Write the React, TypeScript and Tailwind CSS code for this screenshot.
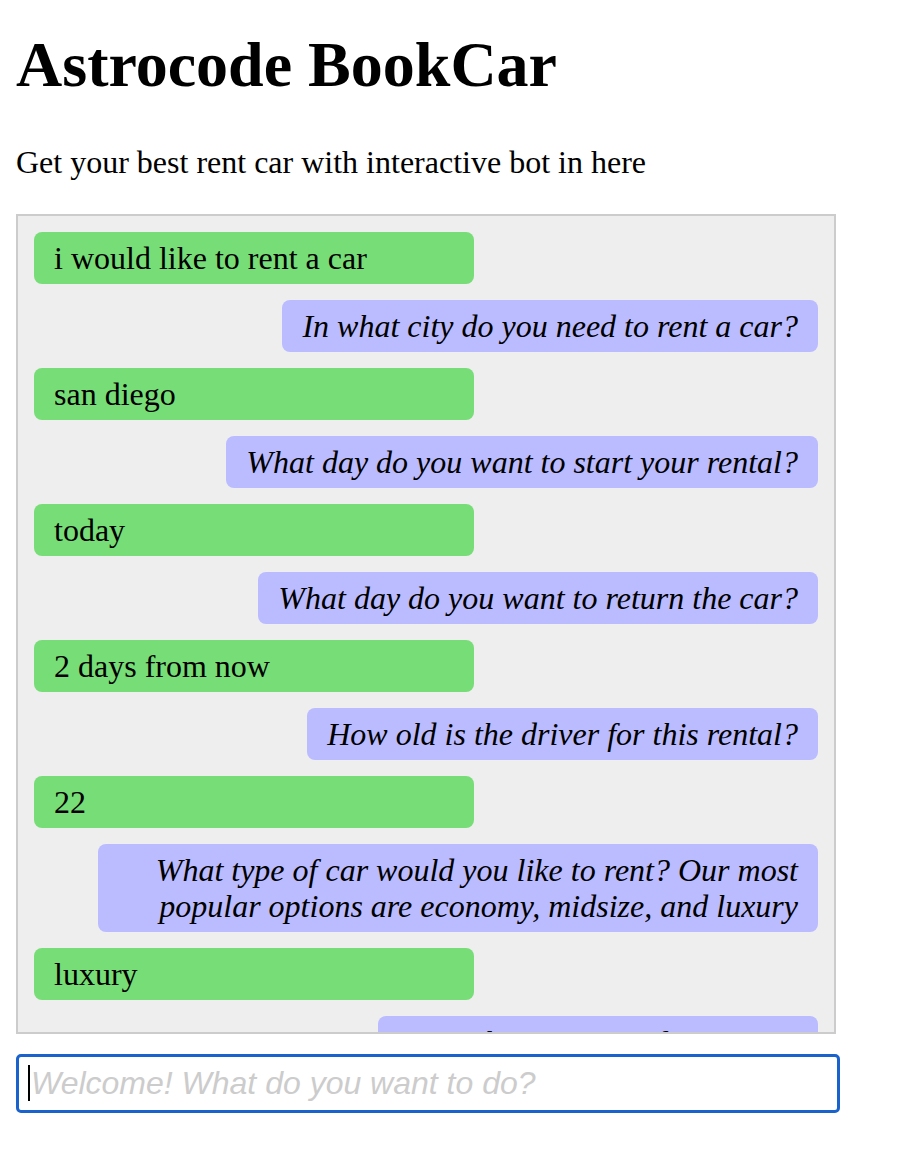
import React from 'react';

type Message = { from: 'user' | 'lex'; text: string };

const messages: Message[] = [
  { from: 'user', text: 'i would like to rent a car' },
  { from: 'lex', text: 'In what city do you need to rent a car?' },
  { from: 'user', text: 'san diego' },
  { from: 'lex', text: 'What day do you want to start your rental?' },
  { from: 'user', text: 'today' },
  { from: 'lex', text: 'What day do you want to return the car?' },
  { from: 'user', text: '2 days from now' },
  { from: 'lex', text: 'How old is the driver for this rental?' },
  { from: 'user', text: '22' },
  {
    from: 'lex',
    text: 'What type of car would you like to rent? Our most popular options are economy, midsize, and luxury',
  },
  { from: 'user', text: 'luxury' },
  { from: 'lex', text: 'What is name of your car?' },
];

const App: React.FC = () => {
  return (
    <div className="min-h-screen bg-white pl-4 pt-[28px] text-black font-['Liberation_Serif','Times_New_Roman',serif]">
      <h1 className="text-[64px] font-bold leading-[74px]">Astrocode BookCar</h1>
      <p className="mt-[42px] mb-[34px] text-[32px] leading-[36px]">
        Get your best rent car with interactive bot in here
      </p>

      <div className="h-[820px] w-[820px] overflow-hidden border-2 border-[#ccc] bg-[#eee] p-2">
        <div className="flex flex-col">
          {messages.map((m, i) =>
            m.from === 'user' ? (
              <p
                key={i}
                className="m-2 min-w-[440px] max-w-[720px] self-start rounded-lg bg-[#7d7] px-5 py-2 text-[32px] leading-[36px]"
              >
                {m.text}
              </p>
            ) : (
              <p
                key={i}
                className="m-2 min-w-[440px] max-w-[720px] self-end rounded-lg bg-[#bbf] px-5 py-2 text-right text-[32px] italic leading-[36px]"
              >
                {m.text}
              </p>
            )
          )}
        </div>
      </div>

      <div className="relative mt-[20px] w-[824px]">
        <input
          type="text"
          placeholder="Welcome! What do you want to do?"
          className="h-[59px] w-[824px] rounded-[5px] border-[3px] border-[#1a62cc] bg-white pl-[12px] text-[32px] font-['Liberation_Sans',Arial,sans-serif] outline-none placeholder:italic placeholder:text-[#ccc]"
        />
        <span className="pointer-events-none absolute left-[12px] top-[11px] h-[36px] w-[2px] bg-black" />
      </div>
    </div>
  );
};

export default App;
